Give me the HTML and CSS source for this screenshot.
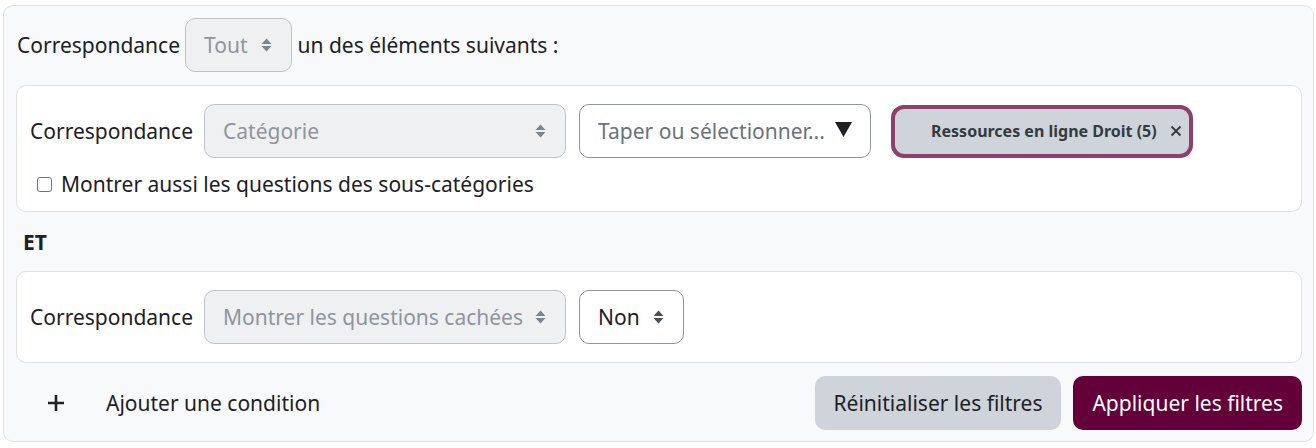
FILE: index.html
```html
<!DOCTYPE html>
<html lang="fr">
<head>
<meta charset="utf-8">
<title>Filtres</title>
<link rel="stylesheet" href="styles.css">
</head>
<body>
<div class="filters">
  <div class="match-row">
    <span class="label">Correspondance</span>
    <div class="select disabled compact"><span>Tout</span><svg class="sort" viewBox="0 0 11 14"><polygon points="0.5,6 10.5,6 5.5,0.5"/><polygon points="0.5,8 10.5,8 5.5,13.5"/></svg></div>
    <span class="label">un des éléments suivants :</span>
  </div>

  <div class="card card-first">
    <div class="cond-row">
      <span class="label">Correspondance</span>
      <div class="select disabled wide"><span>Catégorie</span><svg class="sort" viewBox="0 0 11 14"><polygon points="0.5,6 10.5,6 5.5,0.5"/><polygon points="0.5,8 10.5,8 5.5,13.5"/></svg></div>
      <div class="select auto"><span class="placeholder">Taper ou sélectionner...</span><svg class="down" viewBox="0 0 17 17"><polygon points="0,1 17,1 8.5,16"/></svg></div>
      <div class="chip"><span>Ressources en ligne Droit (5)</span><svg class="close" viewBox="0 0 12 12"><path d="M1.5 1.5 L10.5 10.5 M10.5 1.5 L1.5 10.5"/></svg></div>
    </div>
    <label class="check"><span class="box"></span><span>Montrer aussi les questions des sous-catégories</span></label>
  </div>

  <div class="join">ET</div>

  <div class="card card-second">
    <div class="cond-row">
      <span class="label">Correspondance</span>
      <div class="select disabled wide"><span>Montrer les questions cachées</span><svg class="sort" viewBox="0 0 11 14"><polygon points="0.5,6 10.5,6 5.5,0.5"/><polygon points="0.5,8 10.5,8 5.5,13.5"/></svg></div>
      <div class="select compact"><span>Non</span><svg class="sort" viewBox="0 0 11 14"><polygon points="0.5,6 10.5,6 5.5,0.5"/><polygon points="0.5,8 10.5,8 5.5,13.5"/></svg></div>
    </div>
  </div>

  <div class="footer">
    <button class="add"><svg class="plus" viewBox="0 0 18 18"><path d="M9 1 V17 M1 9 H17"/></svg><span>Ajouter une condition</span></button>
    <div class="actions">
      <button class="btn secondary">Réinitialiser les filtres</button>
      <button class="btn primary">Appliquer les filtres</button>
    </div>
  </div>
</div>
</body>
</html>
```

FILE: styles.css
```css
* { box-sizing: border-box; }

body {
  margin: 0;
  padding: 5px 2px 0 3px;
  background: #ffffff;
  font-family: "Noto Sans", "Open Sans", sans-serif;
  font-size: 21px;
  color: #1d2125;
}

.filters {
  width: 1311px;
  height: 437px;
  background: #f8f9fa;
  border: 1px solid #dee2e6;
  border-radius: 10px;
  padding: 12px 11px 10px 12px;
  display: flex;
  flex-direction: column;
}

.match-row {
  display: flex;
  align-items: center;
  gap: 6px;
  height: 54px;
  padding-left: 1px;
}

.match-row .select { margin-left: -1px; }

.label { white-space: nowrap; }

.select {
  height: 54px;
  border: 1px solid #8f959e;
  border-radius: 10px;
  background: #ffffff;
  display: flex;
  align-items: center;
  justify-content: space-between;
  padding: 0 19px 0 18px;
  white-space: nowrap;
}

.select.disabled {
  background: #eef0f2;
  border-color: #bfc3c8;
  color: #8f959e;
}

.select.compact { gap: 13px; }
.select.wide { width: 362px; }
.select.auto { width: 292px; padding-right: 18px; }
.select .placeholder { color: #6a737b; }

.sort { width: 11px; height: 14px; fill: #495057; flex: none; }
.select.disabled .sort { fill: #7c848c; }
.down { width: 17px; height: 17px; fill: #1d2125; flex: none; margin-top: -3px; }

.card {
  background: #ffffff;
  border: 1px solid #dee2e6;
  border-radius: 10px;
  padding: 18px 13px;
}

.card-first { margin-top: 13px; padding-bottom: 13px; }
.card-second { margin-top: 15px; }

.cond-row {
  display: flex;
  align-items: center;
  gap: 13px;
}

.cond-row .label { margin-right: -2px; }

.chip {
  margin-left: 7px;
  height: 53px;
  width: 302px;
  border: 4px solid #8c406b;
  border-radius: 13px;
  background: #ced4da;
  display: flex;
  align-items: center;
  padding: 0 11px 0 36px;
  gap: 13px;
  font-size: 16px;
  font-weight: 700;
  color: #343a40;
  white-space: nowrap;
}

.close {
  width: 12px;
  height: 12px;
  stroke: #343a40;
  stroke-width: 1.8;
  fill: none;
  flex: none;
}

.check {
  display: flex;
  align-items: center;
  height: 28px;
  margin-top: 12px;
  padding-left: 7px;
  gap: 9px;
}

.box {
  width: 15px;
  height: 15px;
  border: 1px solid #6c757d;
  border-radius: 3px;
  background: #fff;
  flex: none;
}

.join {
  font-weight: 700;
  height: 28px;
  line-height: 28px;
  margin: 16px 0 0 7px;
}

.footer {
  margin-top: 13px;
  display: flex;
  align-items: center;
  justify-content: space-between;
}

.add {
  border: none;
  background: none;
  font: inherit;
  color: #1d2125;
  display: flex;
  align-items: center;
  height: 54px;
  padding: 0 0 0 31px;
  gap: 41px;
}

.plus {
  width: 18px;
  height: 18px;
  stroke: #1d2125;
  stroke-width: 2.6;
  fill: none;
}

.actions {
  display: flex;
  gap: 12px;
}

.btn {
  height: 54px;
  border: none;
  border-radius: 10px;
  font: inherit;
  padding: 0 19px;
  white-space: nowrap;
}

.btn.secondary { background: #ced4da; color: #1d2125; }
.btn.primary { background: #63003a; color: #ffffff; }
```
